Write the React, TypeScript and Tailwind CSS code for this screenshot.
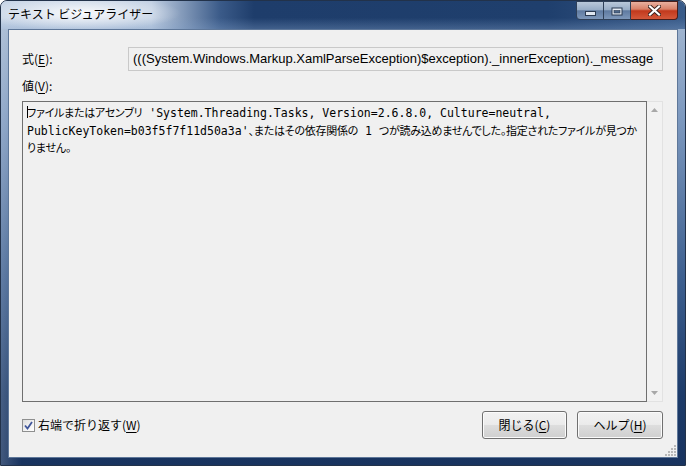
import React from 'react';

const M = ({ children }: { children: React.ReactNode }) => (
  <span className="font-['DejaVu_Sans_Mono',monospace] text-[11.5px]">{children}</span>
);

const J = ({ children }: { children: React.ReactNode }) => (
  <span className="font-['Noto_Sans_CJK_JP',sans-serif] text-[11px] tracking-[-0.25px] [font-feature-settings:'palt']">{children}</span>
);

const U = ({ children }: { children: React.ReactNode }) => (
  <span className="underline underline-offset-[2px]">{children}</span>
);

const TextVisualizer = () => {
  return (
    <div className="w-[686px] h-[466px] bg-white font-['Noto_Sans_CJK_JP',sans-serif] text-black">
      <div className="flex flex-col w-full h-full rounded-t-[7px] border border-[#22324a] overflow-hidden bg-[linear-gradient(90deg,rgba(255,255,255,0.18)_0%,rgba(255,255,255,0)_3%),linear-gradient(180deg,#a9bcd4_0%,#7d99bf_25%,#3d5f8f_60%,#1d3b69_85%,#18335f_100%)]">
        {/* Title bar */}
        <div className="h-[28px] shrink-0 flex bg-[radial-gradient(ellipse_100px_18px_at_80px_12px,rgba(255,255,255,0.9),rgba(255,255,255,0)_100%),linear-gradient(180deg,rgba(0,0,0,0)_60%,rgba(130,160,200,0.35)_100%),linear-gradient(90deg,#c6d4e6_0%,#bfcee2_22%,#3b5b89_32%,#1e3d6b_37%,#1f3f6d_80%,#3a5c8a_100%)]">
          <div className="pl-[7px] pt-[5px] text-[12px] leading-[16px] text-black">
            テキスト ビジュアライザー
          </div>

          {/* Caption buttons */}
          <div className="ml-auto mr-[7px] flex h-[19px]">
            <div className="w-[28px] h-full border border-[#2f4058] rounded-bl-[4px] bg-[linear-gradient(180deg,#b9c8da_0%,#98adc6_45%,#5f7ba1_52%,#7d97ba_100%)] flex items-end justify-center pb-[3px]">
              <svg width="11" height="5" viewBox="0 0 11 5">
                <rect x="0.5" y="0.5" width="10" height="4" fill="#dfe7f1" stroke="#2b3b52" />
              </svg>
            </div>
            <div className="w-[27px] h-full border-y border-r border-[#2f4058] bg-[linear-gradient(180deg,#b9c8da_0%,#98adc6_45%,#5f7ba1_52%,#7d97ba_100%)] flex items-start justify-center pt-[5px]">
              <svg width="12" height="9" viewBox="0 0 12 9">
                <rect x="0.5" y="0.5" width="11" height="8" fill="#2b3b52" />
                <rect x="1.5" y="1.5" width="9" height="6" fill="#e4ebf4" />
                <rect x="3" y="3.5" width="6" height="2.5" fill="#4d6789" stroke="#2b3b52" strokeWidth="0.6" />
              </svg>
            </div>
            <div className="w-[47px] h-full border-y border-r border-[#4a1e1a] rounded-br-[4px] bg-[linear-gradient(180deg,#e8b0a0_0%,#d88068_42%,#c2391d_52%,#d4583a_100%)] flex items-center justify-center">
              <svg width="13" height="11" viewBox="0 0 13 11">
                <path d="M2 1.5 L11 9.5 M11 1.5 L2 9.5" stroke="#3a2420" strokeWidth="4" strokeLinecap="square" />
                <path d="M2 1.5 L11 9.5 M11 1.5 L2 9.5" stroke="#ffffff" strokeWidth="2.2" strokeLinecap="square" />
              </svg>
            </div>
          </div>
        </div>

        {/* Client area */}
        <div className="relative mx-[7px] mb-[7px] flex-1 flex flex-col border border-[#5e7799] bg-[#f0f0f0] pl-[13px] pr-[14px] text-[12px]">
          {/* Expression */}
          <div className="mt-[17px] h-[24px] flex items-center">
            <div className="w-[106px]">
              式(<U>E</U>):
            </div>
            <div className="flex-1 h-full border border-[#c9c9c9] bg-[#f0f0f0] pl-[4px] flex items-center font-['Liberation_Sans',sans-serif] text-[13px] whitespace-nowrap overflow-hidden">
              (((System.Windows.Markup.XamlParseException)$exception)._innerException)._message
            </div>
          </div>

          {/* Value label */}
          <div className="mt-[7px] h-[16px] leading-[16px]">
            値(<U>V</U>):
          </div>

          {/* Value box */}
          <div className="mt-[7px] h-[301px] flex">
            <div className="flex-1 border border-[#6f6f6f] pl-[4px] pt-[2px] leading-[15.5px] whitespace-pre overflow-hidden">
              <div>
                <span className="inline-block w-px h-[12px] bg-black -mr-px align-[-1px]" />
                <J>ファイルまたはアセンブリ</J>
                <M> 'System.Threading.Tasks, Version=2.6.8.0, Culture=neutral,</M>
              </div>
              <div>
                <M>PublicKeyToken=b03f5f7f11d50a3a'</M>
                <J>、またはその依存関係の</J>
                <M> 1 </M>
                <J>つが読み込めませんでした。指定されたファイルが見つか</J>
              </div>
              <div>
                <J>りません。</J>
              </div>
            </div>
            {/* Scrollbar */}
            <div className="w-[16px] border-y border-r border-[#e2e2e2] bg-[#f2f2f2] flex flex-col justify-between items-center py-[6px]">
              <svg width="7" height="4" viewBox="0 0 7 4">
                <path d="M0 4 L3.5 0 L7 4 Z" fill="#a8a8a8" />
              </svg>
              <svg width="7" height="4" viewBox="0 0 7 4">
                <path d="M0 0 L7 0 L3.5 4 Z" fill="#a8a8a8" />
              </svg>
            </div>
          </div>

          {/* Bottom row */}
          <div className="mt-[9px] h-[28px] flex items-center">
            <div className="w-[13px] h-[13px] border border-[#8e8f8f] bg-[linear-gradient(135deg,#dcdcdc_0%,#f4f4f4_60%,#ffffff_100%)] flex items-center justify-center">
              <svg width="9" height="9" viewBox="0 0 9 9">
                <path d="M1 4.5 L3.5 7.5 L8 1" fill="none" stroke="#3f559a" strokeWidth="1.8" />
              </svg>
            </div>
            <div className="ml-[3px]">
              右端で折り返す(<U>W</U>)
            </div>
            <button className="ml-auto w-[85px] h-[28px] border border-[#707070] rounded-[3px] shadow-[inset_0_0_0_1px_#fbfbfb] bg-[linear-gradient(180deg,#f2f2f2_0%,#ebebeb_48%,#dddddd_52%,#cfcfcf_100%)] text-[12px]">
              閉じる(<U>C</U>)
            </button>
            <button className="ml-[10px] w-[86px] h-[28px] border border-[#707070] rounded-[3px] shadow-[inset_0_0_0_1px_#fbfbfb] bg-[linear-gradient(180deg,#f2f2f2_0%,#ebebeb_48%,#dddddd_52%,#cfcfcf_100%)] text-[12px]">
              ヘルプ(<U>H</U>)
            </button>
          </div>

          {/* Resize grip */}
          <svg className="absolute right-[1px] bottom-[1px]" width="11" height="11" viewBox="0 0 11 11">
            {[
              [9, 1], [9, 4], [6, 4], [9, 7], [6, 7], [3, 7], [9, 10], [6, 10], [3, 10], [0, 10],
            ].map(([x, y], i) => (
              <rect key={i} x={x} y={y - 1} width="2" height="2" fill="#b8b8b8" />
            ))}
          </svg>
        </div>
      </div>
    </div>
  );
};

export default TextVisualizer;
